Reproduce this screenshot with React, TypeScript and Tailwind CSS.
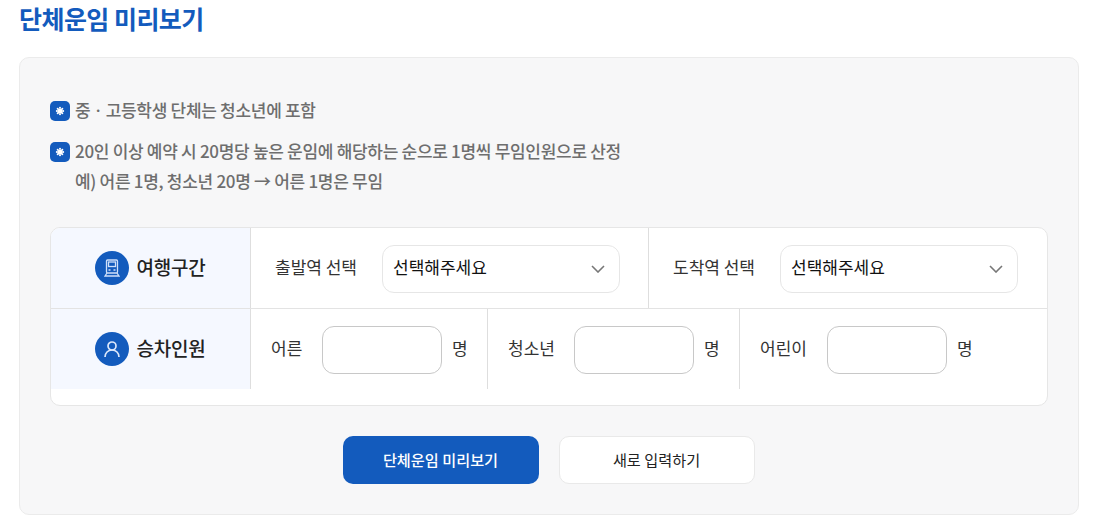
const font = { fontFamily: '"Noto Sans CJK KR", "Noto Sans", sans-serif' };

function Bullet() {
  return (
    <span className="flex h-5 w-5 shrink-0 items-center justify-center rounded-[5px] bg-[#135bbd]">
      <svg width="10" height="10" viewBox="0 0 10 10" fill="#fff">
        <circle cx="5" cy="5" r="2.6" />
        <circle cx="5" cy="1.8" r="1" />
        <circle cx="5" cy="8.2" r="1" />
        <circle cx="1.8" cy="5" r="1" />
        <circle cx="8.2" cy="5" r="1" />
        <circle cx="2.7" cy="2.7" r="1" />
        <circle cx="7.3" cy="2.7" r="1" />
        <circle cx="2.7" cy="7.3" r="1" />
        <circle cx="7.3" cy="7.3" r="1" />
      </svg>
    </span>
  );
}

function Chevron() {
  return (
    <svg width="14" height="8" viewBox="0 0 14 8" fill="none" stroke="#777" strokeWidth="1.6">
      <path d="M1 1l6 6 6-6" />
    </svg>
  );
}

function SelectBox({ w }: { w: string }) {
  return (
    <div className={`mt-[1px] flex h-12 items-center justify-between rounded-[12px] border border-[#e6e6e6] bg-white pl-[10px] pr-[14px] text-[17px] text-[#111] ${w}`}>
      <span className="mb-[3px]">선택해주세요</span>
      <Chevron />
    </div>
  );
}

function HeadCell({ label, icon }: { label: string; icon: React.ReactNode }) {
  return (
    <div className="flex w-[200px] shrink-0 items-center justify-center gap-[7px] border-r border-[#dedede] bg-[#f5f8ff]">
      <span className="flex h-[34px] w-[34px] items-center justify-center rounded-full bg-[#135bbd]">{icon}</span>
      <span className="mb-[2px] text-[19px] font-medium tracking-[-0.2px] text-[#222]">{label}</span>
    </div>
  );
}

function Count({ label, w, border, labelW }: { label: string; w: string; border?: boolean; labelW: string }) {
  return (
    <div className={`flex h-full items-center ${w} ${border ? "border-r border-[#dedede]" : ""}`}>
      <span className={`mb-[3px] text-[17px] text-[#333] ${labelW}`}>{label}</span>
      <div className="mt-[1px] h-12 w-[120px] rounded-[12px] border border-[#c8c8c8] bg-white" />
      <span className="mb-[3px] ml-[10px] text-[17px] text-[#333]">명</span>
    </div>
  );
}

export default function App() {
  return (
    <div style={font} className="h-[528px] w-[1099px] overflow-hidden bg-white">
      <h1 className="mx-[19px] h-[57px] text-[25px] font-bold leading-[36px] tracking-[-0.55px] text-[#135bbd]">단체운임 미리보기</h1>
      <div className="mx-[19px] h-[458px] w-[1060px] rounded-[10px] border border-[#ebebeb] bg-[#f7f7f8] px-[30px] pt-[43px]">
        <div className="flex h-5 items-center gap-[5px] text-[17px] font-medium leading-[20px] tracking-[-0.3px] text-[#6e6e6e]">
          <Bullet />
          <span className="mb-[2px]">중ㆍ고등학생 단체는 청소년에 포함</span>
        </div>
        <div className="mt-[21px] flex h-5 items-center gap-[5px] text-[17px] font-medium leading-[20px] tracking-[-0.3px] text-[#6e6e6e]">
          <Bullet />
          <span className="mb-[2px]">20인 이상 예약 시 20명당 높은 운임에 해당하는 순으로 1명씩 무임인원으로 산정</span>
        </div>
        <p className="ml-[25px] mt-[9px] text-[17px] font-medium leading-[20px] tracking-[-0.3px] text-[#6e6e6e]">예) 어른 1명, 청소년 20명 → 어른 1명은 무임</p>

        <div className="mt-[36px] h-[179px] w-[998px] overflow-hidden rounded-[10px] border border-[#e6e6e6] bg-white">
          <div className="flex h-[81px] border-b border-[#e3e3e3]">
            <HeadCell
              label="여행구간"
              icon={
                <svg width="18" height="20" viewBox="0 0 18 20" fill="none" stroke="#cfe0fa" strokeWidth="1.3">
                  <rect x="3.5" y="2" width="11" height="13" rx="1" />
                  <rect x="5.5" y="4" width="7" height="4.5" />
                  <path d="M5.5 12h2M10.5 12h2M4 15l-2 3h14l-2-3" />
                </svg>
              }
            />
            <div className="flex w-[398px] items-center border-r border-[#dedede] pl-[24px]">
              <span className="mb-[3px] w-[107px] text-[17px] text-[#333]">출발역 선택</span>
              <SelectBox w="w-[238px]" />
            </div>
            <div className="flex flex-1 items-center pl-[24px]">
              <span className="mb-[3px] w-[107px] text-[17px] text-[#333]">도착역 선택</span>
              <SelectBox w="w-[238px]" />
            </div>
          </div>
          <div className="flex h-[80px]">
            <HeadCell
              label="승차인원"
              icon={
                <svg width="20" height="20" viewBox="0 0 20 20" fill="none" stroke="#dbe7fb" strokeWidth="1.7">
                  <circle cx="10" cy="7" r="4" />
                  <path d="M3 18c0-4 3-7 7-7s7 3 7 7" />
                </svg>
              }
            />
            <div className="flex flex-1 pl-[20px]">
              <Count label="어른" w="w-[217px]" border labelW="w-[51px]" />
              <div className="w-[20px]" />
              <Count label="청소년" w="w-[232px]" border labelW="w-[66px]" />
              <div className="w-[20px]" />
              <Count label="어린이" w="w-[230px]" labelW="w-[67px]" />
            </div>
          </div>
        </div>

        <div className="mt-[30px] flex justify-center gap-[20px] pr-[1px]">
          <button className="h-12 w-[196px] rounded-[10px] bg-[#135bbd] pb-[1px] text-[15.2px] font-medium text-white">단체운임 미리보기</button>
          <button className="h-12 w-[196px] rounded-[10px] border border-[#e9e9e9] bg-white pb-[1px] text-[15.2px] text-[#222]">새로 입력하기</button>
        </div>
      </div>
    </div>
  );
}
